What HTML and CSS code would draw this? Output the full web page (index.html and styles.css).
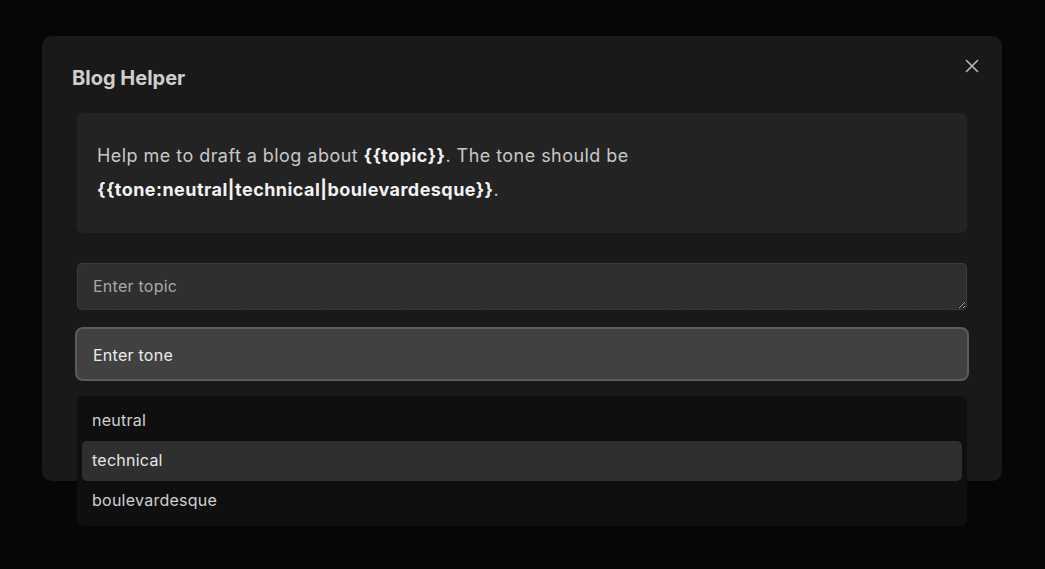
FILE: index.html
```html
<!DOCTYPE html>
<html>
<head>
<meta charset="utf-8">
<link rel="stylesheet" href="styles.css">
</head>
<body>
<div class="modal">
  <div class="header">
    <h2 class="title">Blog Helper</h2>
    <button class="close" aria-label="Close">
      <svg width="14" height="14" viewBox="0 0 14 14"><path d="M1.5 1.5L12.5 12.5M12.5 1.5L1.5 12.5" stroke="#b8b8b8" stroke-width="1.6" stroke-linecap="round"/></svg>
    </button>
  </div>
  <div class="content">
    <div class="prompt">Help me to draft a blog about <b>{{topic}}</b>. The tone should be <b>{{tone:neutral|technical|boulevardesque}}</b>.</div>
    <textarea class="topic" placeholder="Enter topic"></textarea>
    <div class="tone">Enter tone</div>
    <ul class="menu">
      <li class="item">neutral</li>
      <li class="item active">technical</li>
      <li class="item">boulevardesque</li>
    </ul>
  </div>
</div>
</body>
</html>
```

FILE: styles.css
```css
* { box-sizing: border-box; }
html, body { margin: 0; height: 100%; }
body {
  background: #060606;
  font-family: Inter, "Noto Sans", sans-serif;
  padding: 36px 43px 0 42px;
  overflow: hidden;
}
.modal {
  width: 960px;
  height: 445px;
  background: #191919;
  border-radius: 10px;
  padding: 27px 30px 0 30px;
}
.header {
  display: flex;
  justify-content: space-between;
  align-items: flex-start;
  height: 50px;
}
.title {
  margin: 0;
  font-size: 20px;
  font-weight: 700;
  color: #cfcfcf;
  line-height: 30px;
}
.close {
  background: none;
  border: 0;
  padding: 0;
  margin: -4px -7px 0 0;
  width: 14px;
  height: 14px;
  display: flex;
}
.content {
  padding: 0 5px;
  display: flex;
  flex-direction: column;
}
.prompt {
  background: #232323;
  border-radius: 6px;
  padding: 26px 20px;
  height: 120px;
  font-size: 18px;
  line-height: 34px;
  letter-spacing: 0.45px;
  color: #c8c8c8;
}
.prompt b { color: #f2f2f2; font-weight: 700; }
.topic {
  margin-top: 30px;
  height: 47px;
  background: #2f2f2f;
  border: 1px solid #3c3c3c;
  border-bottom-style: dashed;
  border-radius: 5px;
  padding: 11px 15px;
  font-family: Inter, "Noto Sans", sans-serif;
  font-size: 16px;
  line-height: 22px;
  letter-spacing: 0.25px;
  color: #ddd;
  resize: vertical;
  outline: none;
}
.topic::placeholder { color: #a8a8a8; }
.tone {
  margin: 17px -2px 0 -2px;
  height: 54px;
  background: #414141;
  border: 2px solid #5c5c5c;
  border-radius: 8px;
  padding: 1px 16px 0;
  display: flex;
  align-items: center;
  font-size: 16px;
  letter-spacing: 0.25px;
  color: #ececec;
}
.menu {
  list-style: none;
  margin: 15px 0 0 0;
  padding: 5px;
  background: #0f0f0f;
  border-radius: 6px;
}
.item {
  height: 40px;
  display: flex;
  align-items: center;
  padding: 0 10px 2px;
  font-size: 16px;
  letter-spacing: 0.25px;
  color: #cfcfcf;
  border-radius: 5px;
}
.item.active {
  background: #2f2f2f;
  color: #e6e6e6;
}
```
